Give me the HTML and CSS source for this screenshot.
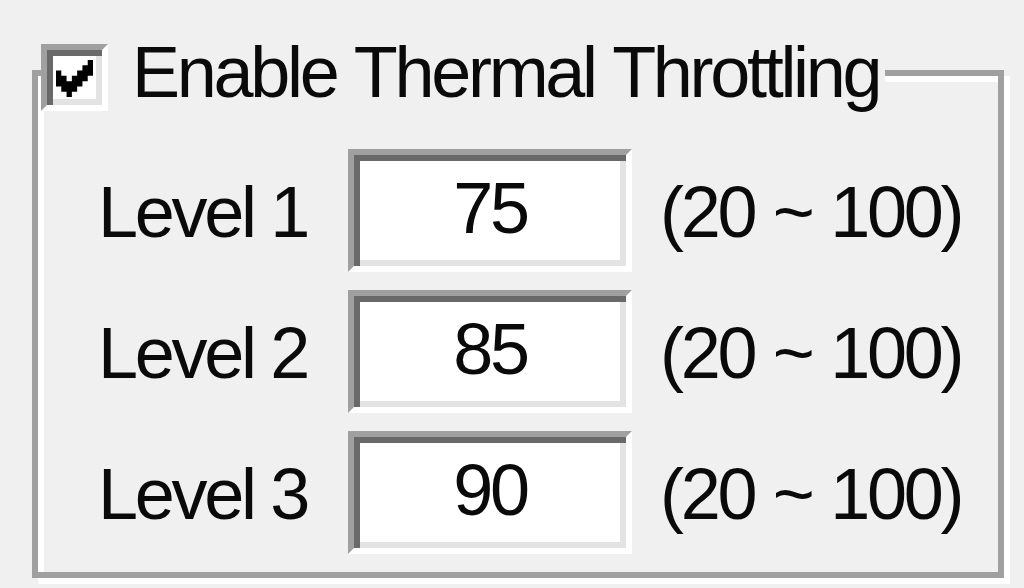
FILE: index.html
```html
<!DOCTYPE html>
<html>
<head>
<meta charset="utf-8">
<link rel="stylesheet" href="styles.css">
</head>
<body>
<div class="group">
  <div class="legend">
    <span class="checkbox">
      <svg class="check" viewBox="0 0 7 7" width="37" height="37">
        <path d="M6 0H7V3H6V4H5V5H4V6H3V7H2V6H1V5H0V2H1V3H2V4H3V3H4V2H5V1H6Z"/>
      </svg>
    </span>
    <span class="legend-text">Enable Thermal Throttling</span>
  </div>
  <div class="rows">
    <span class="label">Level 1</span>
    <span class="field">75</span>
    <span class="range">(20 ~ 100)</span>
    <span class="label">Level 2</span>
    <span class="field">85</span>
    <span class="range">(20 ~ 100)</span>
    <span class="label">Level 3</span>
    <span class="field">90</span>
    <span class="range">(20 ~ 100)</span>
  </div>
</div>
</body>
</html>
```

FILE: styles.css
```css
html, body {
  margin: 0;
  padding: 0;
  background: #f0f0f0;
  overflow: hidden;
}

body {
  width: 1024px;
  height: 588px;
  font-family: "Liberation Sans", Arial, sans-serif;
  font-size: 72px;
  line-height: 72px;
  letter-spacing: -3.3px;
  word-spacing: 2px;
  color: #0a0a0a;
}

.group {
  position: relative;
  box-sizing: border-box;
  margin: 70px 0 0 32px;
  width: 972px;
  height: 508px;
  border: 6px solid #a0a0a0;
  box-shadow: inset 6px 6px 0 #fff, 6px 6px 0 #fff;
}

.legend {
  position: absolute;
  left: 3px;
  top: -40px;
  display: flex;
  align-items: flex-start;
  background: #f0f0f0;
  padding-right: 6px;
}

.checkbox {
  box-sizing: border-box;
  display: block;
  width: 67px;
  height: 67px;
  margin-top: 8px;
  background: #fff;
  border: 6px solid;
  border-color: #a0a0a0 #fff #fff #a0a0a0;
  box-shadow: inset 6px 6px 0 #696969, inset -6px -6px 0 #e3e3e3;
  padding: 10px 0 0 9px;
}

.check {
  display: block;
  fill: #000;
}

.legend-text {
  margin-left: 24px;
  display: block;
}

.rows {
  display: grid;
  grid-template-columns: 250px 284px auto;
  grid-auto-rows: 123px;
  row-gap: 18px;
  align-items: center;
  padding: 73px 0 0 60px;
}

.label {
  display: block;
  padding-top: 2px;
  word-spacing: 0;
}

.field {
  box-sizing: border-box;
  display: block;
  height: 123px;
  background: #fff;
  border: 6px solid;
  border-color: #a0a0a0 #fff #fff #a0a0a0;
  box-shadow: inset 6px 6px 0 #696969, inset -6px -6px 0 #e3e3e3;
  padding-top: 17px;
  text-align: center;
}

.range {
  display: block;
  margin-left: 28px;
  padding-top: 2px;
}
```
